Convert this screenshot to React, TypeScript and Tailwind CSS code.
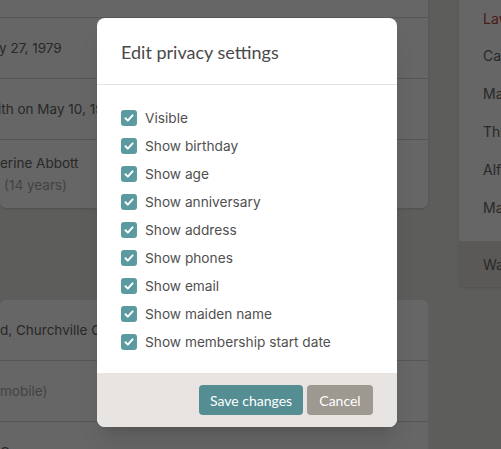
import React from "react";

const OPTIONS = [
  "Visible",
  "Show birthday",
  "Show age",
  "Show anniversary",
  "Show address",
  "Show phones",
  "Show email",
  "Show maiden name",
  "Show membership start date",
];

const FAMILY = ["Law", "Carl", "Mary", "Theo", "Alfred", "Martha"];

function CheckBox() {
  return (
    <span className="flex h-4 w-4 shrink-0 items-center justify-center rounded-[3px] bg-[#5a9aa0]">
      <svg width="12" height="12" viewBox="0 0 12 12" fill="none">
        <path d="M2.5 6.3l2.3 2.3L9.6 3.4" stroke="white" strokeWidth="2" strokeLinecap="round" strokeLinejoin="round" />
      </svg>
    </span>
  );
}

export default function App() {
  return (
    <div
      className="relative h-[449px] w-[501px] overflow-hidden bg-[#e8e8e7] text-[14px] text-[#666]"
      style={{ fontFamily: "Inter, 'Noto Sans', sans-serif" }}
    >
      {/* page behind the dialog */}
      <div className="flex gap-[31px]">
        <div className="flex w-[428px] shrink-0 flex-col">
          <div className="rounded-b-md bg-white shadow-sm">
            <div className="h-[17px]" />
            <div className="flex h-[61px] items-center border-t border-[#d8d8d8] text-[13.5px]">
              <span className="-ml-[1px]">y 27, 1979</span>
            </div>
            <div className="flex h-[61px] items-center border-t border-[#d8d8d8] text-[13.5px]">
              <span className="-ml-[2px]">ith on May 10, 1981</span>
            </div>
            <div className="flex h-[69px] flex-col justify-center border-t border-[#d8d8d8] text-[13.5px] leading-[22px]">
              <span>erine Abbott</span>
              <span className="-ml-[3px] text-[#a8a8a8]">l (14 years)</span>
            </div>
          </div>
          <div className="mt-[92px] rounded-t-md bg-white text-[13.5px]">
            <div className="flex h-[60px] items-center">
              <span>d, Churchville Court</span>
            </div>
            <div className="flex h-[61px] items-center border-t border-[#d8d8d8] text-[#a8a8a8]">
              <span>mobile)</span>
            </div>
            <div className="flex h-[61px] items-start border-t border-[#d8d8d8] pt-[20px]">
              <span>Connor</span>
            </div>
          </div>
        </div>
        <div className="flex w-[200px] shrink-0 flex-col self-start rounded-b-md bg-white shadow-sm">
          <div className="flex h-[36px] items-center pl-[24px] text-[#b5473c]">Lawrence</div>
          {FAMILY.slice(1).map((n) => (
            <div key={n} className="flex h-[38px] items-center pl-[24px]">
              {n}
            </div>
          ))}
          <div className="h-[15px]" />
          <div className="flex h-[46px] items-center rounded-b-md bg-[#e2dfdb] pl-[24px]">Washington</div>
        </div>
      </div>

      {/* overlay */}
      <div className="absolute inset-0 bg-black/60">
        <div className="ml-[97px] mt-[18px] w-[300px] overflow-hidden rounded-lg bg-white shadow-xl">
          <div
            className="flex h-[67px] items-center border-b border-[#e3e3e3] px-6 pt-[2px] text-[18px] text-[#4a4a4a]"
            style={{ fontFamily: "Lato, 'Open Sans', sans-serif" }}
          >
            Edit privacy settings
          </div>
          <div className="flex flex-col px-6 pb-[17px] pt-[19px]">
            {OPTIONS.map((o) => (
              <label key={o} className="flex h-7 items-center gap-2 text-[13.7px] text-[#505050]">
                <CheckBox />
                {o}
              </label>
            ))}
          </div>
          <div
            className="flex h-[54px] items-center justify-end gap-1 bg-[#e8e4e1] px-6 text-[14px] text-white"
            style={{ fontFamily: "Lato, 'Open Sans', sans-serif" }}
          >
            <button className="h-[30px] w-[104px] rounded bg-[#548d92]">Save changes</button>
            <button className="h-[30px] w-[66px] rounded bg-[#9d9890]">Cancel</button>
          </div>
        </div>
      </div>
    </div>
  );
}
